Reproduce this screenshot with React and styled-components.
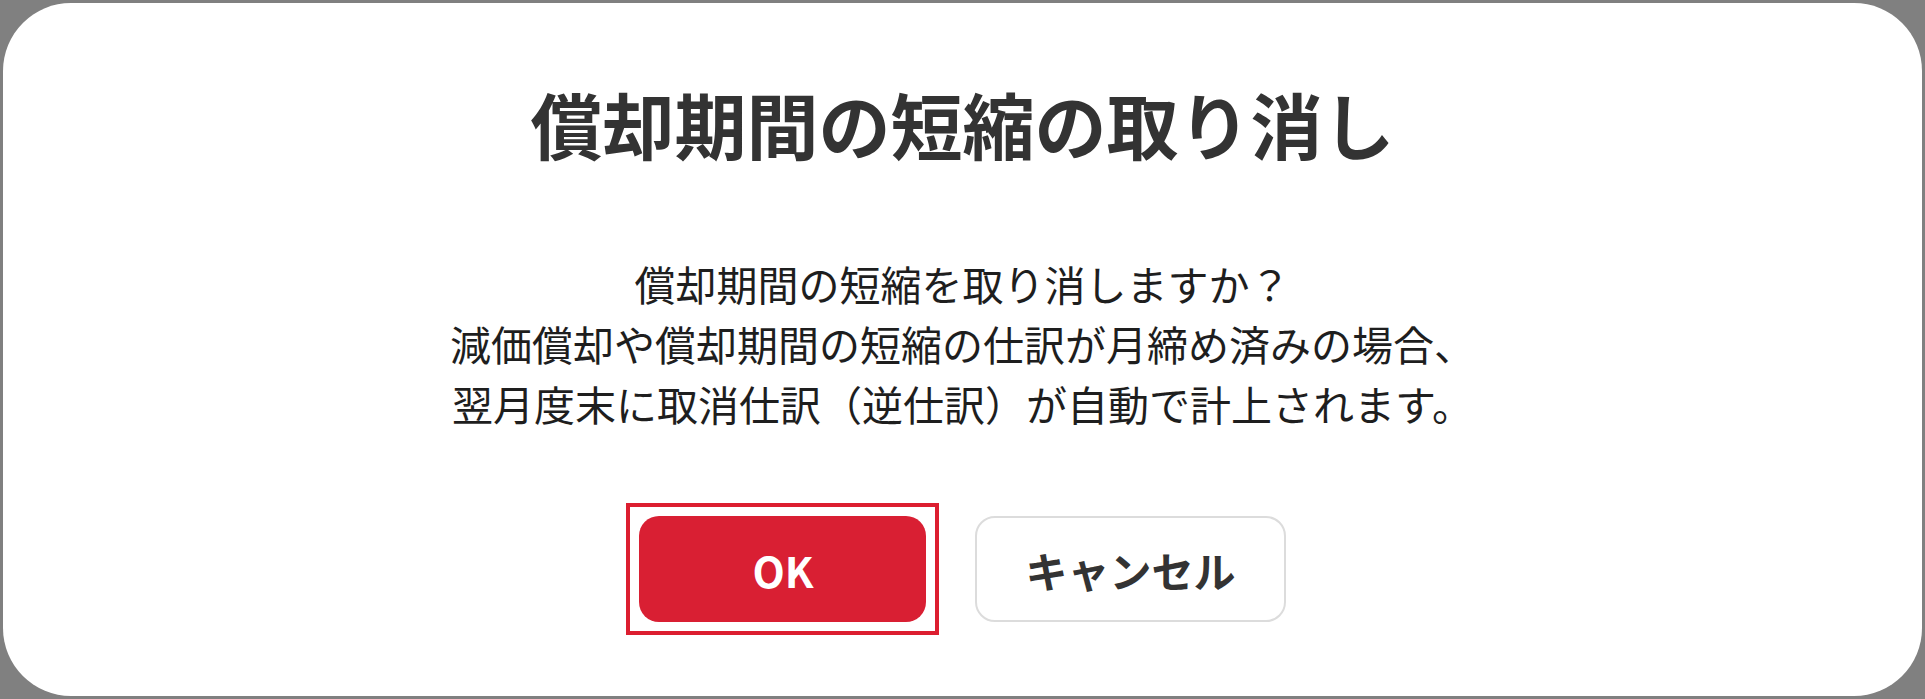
import React from 'react'
import styled, { createGlobalStyle } from 'styled-components';

const GlobalStyle = createGlobalStyle`
    html, body{
        margin: 0;
        padding: 0;
        background: #808080;
        font-family: "Noto Sans CJK JP", "Noto Sans", sans-serif;
    }
    *{
        box-sizing: border-box;
    }
`;

const Overlay = styled.div`
    padding: 3px;
    min-height: 699px;
`;

const Dialog = styled.section`
    background: #fff;
    border-radius: 68px;
    height: 693px;
    padding: 68px 40px 0;
    display: flex;
    flex-direction: column;
    align-items: center;
    color: #333;
`;

const Title = styled.h2`
    margin: 0;
    font-size: 72px;
    font-weight: 700;
    line-height: 104px;
    color: #333;
`;

const Message = styled.div`
    margin-top: 78px;
    text-align: center;
    font-size: 41px;
    line-height: 60px;
    color: #1e1e1e;
    p{
        margin: 0;
    }
`;

const Actions = styled.div`
    margin-top: 83px;
    display: flex;
    gap: 49px;
    align-items: center;
`;

const FocusRing = styled.span`
    position: relative;
    display: inline-flex;
    &::after{
        content: '';
        position: absolute;
        inset: -13px;
        border: 4px solid ${({ $on }) => ($on ? '#dc1e30' : 'transparent')};
        pointer-events: none;
    }
`;

const Button = styled.button`
    height: 106px;
    min-width: 287px;
    padding: 0 48px;
    border-radius: 20px;
    font-family: inherit;
    font-size: 42px;
    font-weight: 700;
    cursor: pointer;
    border: ${({ $primary }) => ($primary ? 'none' : '2px solid #dcdcdc')};
    background: ${({ $primary }) => ($primary ? '#d91f33' : '#fff')};
    color: ${({ $primary }) => ($primary ? '#fff' : '#333')};
    outline: none;
`;

const App = () => {
    return (
        <>
            <GlobalStyle />
            <Overlay>
                <Dialog>
                    <Title>償却期間の短縮の取り消し</Title>
                    <Message>
                        <p>償却期間の短縮を取り消しますか？</p>
                        <p>減価償却や償却期間の短縮の仕訳が月締め済みの場合、</p>
                        <p>翌月度末に取消仕訳（逆仕訳）が自動で計上されます。</p>
                    </Message>
                    <Actions>
                        <FocusRing $on>
                            <Button $primary>OK</Button>
                        </FocusRing>
                        <Button>キャンセル</Button>
                    </Actions>
                </Dialog>
            </Overlay>
        </>
    );
}

export default App;
